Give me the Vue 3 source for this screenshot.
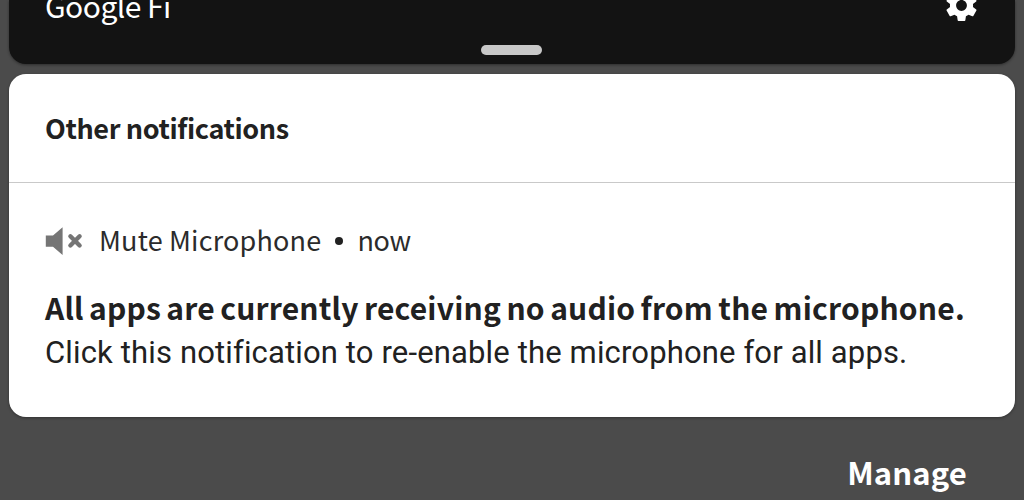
<script setup>
const carrier = 'Google Fi'
const notification = {
  app: 'Mute Microphone',
  time: 'now',
  title: 'All apps are currently receiving no audio from the microphone.',
  body: 'Click this notification to re-enable the microphone for all apps.',
}
</script>

<template>
  <main class="shade">
    <header class="quick-panel">
      <div class="carrier-row">
        <span class="carrier">{{ carrier }}</span>
        <svg class="gear" viewBox="0 0 24 24" aria-hidden="true">
          <path d="M19.43 12.98c.04-.32.07-.64.07-.98s-.03-.66-.07-.98l2.11-1.65c.19-.15.24-.42.12-.64l-2-3.46c-.12-.22-.39-.3-.61-.22l-2.49 1c-.52-.4-1.08-.73-1.69-.98l-.38-2.65C14.46 2.18 14.25 2 14 2h-4c-.25 0-.46.18-.49.42l-.38 2.65c-.61.25-1.17.59-1.69.98l-2.49-1c-.23-.09-.49 0-.61.22l-2 3.46c-.13.22-.07.49.12.64l2.11 1.65c-.04.32-.07.65-.07.98s.03.66.07.98l-2.11 1.65c-.19.15-.24.42-.12.64l2 3.46c.12.22.39.3.61.22l2.49-1c.52.4 1.08.73 1.69.98l.38 2.65c.03.24.24.42.49.42h4c.25 0 .46-.18.49-.42l.38-2.65c.61-.25 1.17-.59 1.69-.98l2.49 1c.23.09.49 0 .61-.22l2-3.46c.12-.22.07-.49-.12-.64l-2.11-1.65zM12 15.5c-1.93 0-3.5-1.57-3.5-3.5s1.57-3.5 3.5-3.5 3.5 1.57 3.5 3.5-1.57 3.5-3.5 3.5z" />
        </svg>
      </div>
      <div class="handle"></div>
    </header>

    <section class="card">
      <h2 class="section-title"><span>Other notifications</span></h2>
      <article class="notification">
        <div class="meta">
          <svg class="mute" viewBox="0 0 38 30" aria-hidden="true">
            <path d="M0.8 9.5H8L17.6 1.2V29L8 20.8H0.8Z" />
            <path class="cross" d="M25.4 10.3L34.6 19.5M34.6 10.3L25.4 19.5" />
          </svg>
          <span class="app">{{ notification.app }}</span>
          <i class="dot"></i>
          <span class="time">{{ notification.time }}</span>
        </div>
        <h3 class="title"><span>{{ notification.title }}</span></h3>
        <p class="body"><span>{{ notification.body }}</span></p>
      </article>
    </section>

    <footer class="footer"><span class="manage">Manage</span></footer>
  </main>
</template>

<style>
body {
  margin: 0;
  overflow: hidden;
}
</style>

<style scoped>
.shade {
  box-sizing: border-box;
  width: 1024px;
  height: 500px;
  padding: 0 9px;
  overflow: hidden;
  background: #4b4b4b;
  color: #212121;
  font-family: "Noto Sans CJK SC", "Noto Sans", sans-serif;
  white-space: nowrap;
}
.quick-panel {
  box-sizing: border-box;
  height: 64px;
  border-radius: 0 0 17px 17px;
  background: #131313;
  box-shadow: 0 1px 3px rgba(0, 0, 0, 0.4);
}
.carrier-row {
  display: flex;
  justify-content: space-between;
  height: 45px;
  padding: 0 35px 0 36px;
}
.carrier {
  margin-top: -17px;
  color: #fff;
  font-size: 30px;
  line-height: 44px;
  letter-spacing: -0.55px;
}
.gear {
  width: 37px;
  height: 37px;
  margin-top: -13px;
  fill: #fff;
}
.handle {
  width: 61px;
  height: 10px;
  margin: 0 auto 0 472.4px;
  border-radius: 5px;
  background: #c8c8c8;
}
.card {
  height: 343px;
  margin-top: 10px;
  border-radius: 17px;
  background: #fff;
  box-shadow: 0 1px 3px rgba(0, 0, 0, 0.35);
}
.section-title {
  height: 108px;
  margin: 0;
  padding-left: 36px;
  border-bottom: 1px solid #c9c9c9;
  font-size: 27px;
  font-weight: 700;
  line-height: 108px;
  letter-spacing: -0.37px;
  font-variant-ligatures: none;
}
.notification {
  padding: 37px 36px 0;
}
.meta {
  display: flex;
  align-items: center;
  height: 40px;
}
.mute {
  width: 38px;
  height: 30px;
  margin: 2px 16px 0 0;
  fill: #757575;
}
.cross {
  stroke: #757575;
  stroke-width: 4.4;
  stroke-linecap: round;
}
.app,
.time {
  color: #2b2b2b;
  font-size: 27px;
  line-height: 40px;
}
.app {
  letter-spacing: 0.18px;
}
.time {
  letter-spacing: -0.3px;
}
.dot {
  width: 8px;
  height: 8px;
  margin: 2px 14px 0;
  border-radius: 50%;
  background: #212121;
}
.title {
  height: 44px;
  margin: 25px 0 0;
  font-size: 30px;
  font-weight: 700;
  line-height: 44px;
  letter-spacing: 0.21px;
  word-spacing: -1.7px;
}
.body {
  height: 42px;
  margin: 3px 0 0;
  font-family: Roboto, sans-serif;
  font-size: 31px;
  line-height: 42px;
  letter-spacing: 0.145px;
}
.footer {
  display: flex;
  justify-content: flex-end;
  padding: 33px 48px 0 0;
}
.manage {
  color: #fff;
  font-size: 31px;
  font-weight: 700;
  line-height: 44px;
  letter-spacing: 0.15px;
}
</style>
